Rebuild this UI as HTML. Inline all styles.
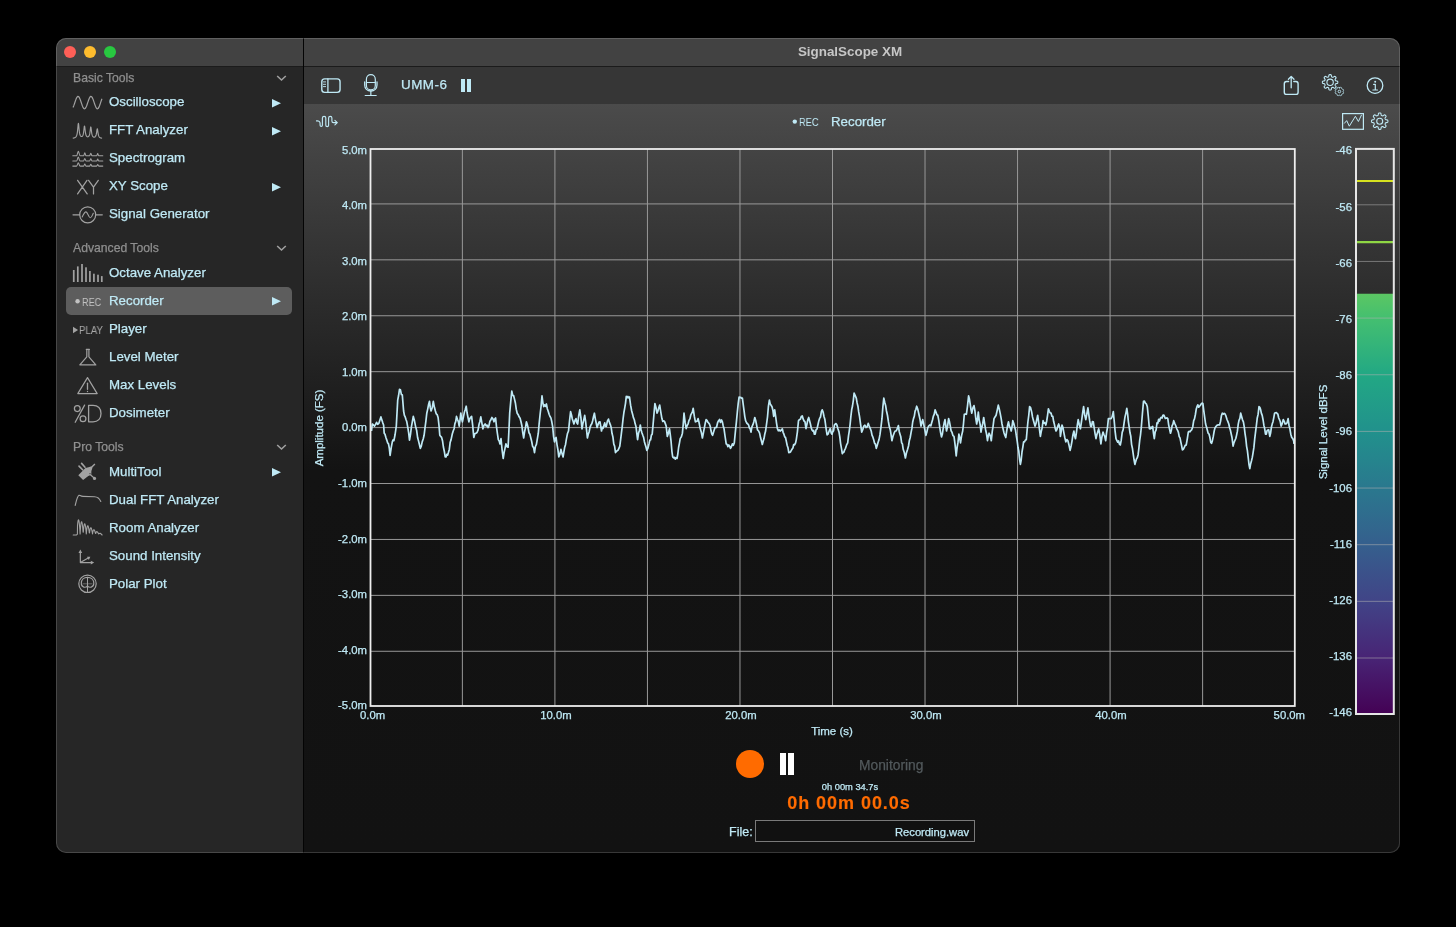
<!DOCTYPE html>
<html><head><meta charset="utf-8"><style>
html,body{margin:0;padding:0;width:1456px;height:927px;overflow:hidden;background:#000;}
.t{position:absolute;font-family:"Liberation Sans", sans-serif;white-space:nowrap;-webkit-text-stroke:0.25px currentColor;will-change:transform;}
svg{overflow:visible;}
</style></head><body>
<div id="win" style="position:absolute;left:56px;top:38px;width:1344px;height:815px;border-radius:10px;overflow:hidden;background:#262626;"><div style="position:absolute;left:0;top:0;width:1344px;height:28px;background:#424242;"></div><div style="position:absolute;left:0;top:28px;width:1344px;height:1px;background:#1b1b1b;"></div><div style="position:absolute;left:248px;top:29px;width:1096px;height:37px;background:#363636;"></div><div style="position:absolute;left:248px;top:66px;width:1096px;height:749px;background:linear-gradient(to bottom,#4b4b4b 0px,#2e2e2e 183px,#131313 366px,#121212 749px);"></div><div style="position:absolute;left:247px;top:0;width:1px;height:815px;background:#040404;"></div></div><div style="position:absolute;left:56px;top:38px;width:1344px;height:815px;border-radius:10px;box-shadow:inset 0 0 0 1px rgba(255,255,255,0.16);"></div><div style="position:absolute;left:63.89999999999999px;top:45.849999999999994px;width:12.4px;height:12.4px;border-radius:50%;background:#fe5f57;"></div><div style="position:absolute;left:83.89999999999999px;top:45.849999999999994px;width:12.4px;height:12.4px;border-radius:50%;background:#febc2e;"></div><div style="position:absolute;left:104.0px;top:45.849999999999994px;width:12.4px;height:12.4px;border-radius:50%;background:#28c840;"></div><div class="t" style="top:43.38px;height:18.76px;line-height:18.76px;font-size:13.4px;color:#c6c6c6;font-weight:700;left:550.3px;width:600px;text-align:center;-webkit-text-stroke:0;">SignalScope XM</div><div class="t" style="top:69.53px;height:17.08px;line-height:17.08px;font-size:12.2px;color:#8f8f8f;font-weight:400;left:72.5px;">Basic Tools</div><svg style="position:absolute;left:276px;top:73.5px;" width="11" height="8" viewBox="0 0 11 8"><path d="M1.2 2 L5.5 6 L9.8 2" fill="none" stroke="#a0a0a0" stroke-width="1.55"/></svg><div class="t" style="top:239.63px;height:17.08px;line-height:17.08px;font-size:12.2px;color:#8f8f8f;font-weight:400;left:72.5px;">Advanced Tools</div><svg style="position:absolute;left:276px;top:243.6px;" width="11" height="8" viewBox="0 0 11 8"><path d="M1.2 2 L5.5 6 L9.8 2" fill="none" stroke="#a0a0a0" stroke-width="1.55"/></svg><div class="t" style="top:438.53px;height:17.08px;line-height:17.08px;font-size:12.2px;color:#8f8f8f;font-weight:400;left:72.5px;">Pro Tools</div><svg style="position:absolute;left:276px;top:442.5px;" width="11" height="8" viewBox="0 0 11 8"><path d="M1.2 2 L5.5 6 L9.8 2" fill="none" stroke="#a0a0a0" stroke-width="1.55"/></svg><div style="position:absolute;left:66px;top:286.6px;width:226.2px;height:28px;border-radius:5px;background:#5d5d5d;"></div><div class="t" style="top:93.48px;height:18.62px;line-height:18.62px;font-size:13.3px;color:#bfe9f5;font-weight:400;left:109.4px;">Oscilloscope</div><svg style="position:absolute;left:272px;top:98.49999999999999px;" width="9" height="8.4" viewBox="0 0 9 8.4"><path d="M0 0 L9 4.2 L0 8.4 Z" fill="#bfe9f5"/></svg><div class="t" style="top:121.48px;height:18.62px;line-height:18.62px;font-size:13.3px;color:#bfe9f5;font-weight:400;left:109.4px;">FFT Analyzer</div><svg style="position:absolute;left:272px;top:126.49999999999999px;" width="9" height="8.4" viewBox="0 0 9 8.4"><path d="M0 0 L9 4.2 L0 8.4 Z" fill="#bfe9f5"/></svg><div class="t" style="top:149.48px;height:18.62px;line-height:18.62px;font-size:13.3px;color:#bfe9f5;font-weight:400;left:109.4px;">Spectrogram</div><div class="t" style="top:177.48px;height:18.62px;line-height:18.62px;font-size:13.3px;color:#bfe9f5;font-weight:400;left:109.4px;">XY Scope</div><svg style="position:absolute;left:272px;top:182.5px;" width="9" height="8.4" viewBox="0 0 9 8.4"><path d="M0 0 L9 4.2 L0 8.4 Z" fill="#bfe9f5"/></svg><div class="t" style="top:205.48px;height:18.62px;line-height:18.62px;font-size:13.3px;color:#bfe9f5;font-weight:400;left:109.4px;">Signal Generator</div><div class="t" style="top:264.18px;height:18.62px;line-height:18.62px;font-size:13.3px;color:#bfe9f5;font-weight:400;left:109.4px;">Octave Analyzer</div><div class="t" style="top:292.18px;height:18.62px;line-height:18.62px;font-size:13.3px;color:#bfe9f5;font-weight:400;left:109.4px;">Recorder</div><svg style="position:absolute;left:272px;top:297.20000000000005px;" width="9" height="8.4" viewBox="0 0 9 8.4"><path d="M0 0 L9 4.2 L0 8.4 Z" fill="#bfe9f5"/></svg><div class="t" style="top:320.18px;height:18.62px;line-height:18.62px;font-size:13.3px;color:#bfe9f5;font-weight:400;left:109.4px;">Player</div><div class="t" style="top:348.18px;height:18.62px;line-height:18.62px;font-size:13.3px;color:#bfe9f5;font-weight:400;left:109.4px;">Level Meter</div><div class="t" style="top:376.18px;height:18.62px;line-height:18.62px;font-size:13.3px;color:#bfe9f5;font-weight:400;left:109.4px;">Max Levels</div><div class="t" style="top:404.18px;height:18.62px;line-height:18.62px;font-size:13.3px;color:#bfe9f5;font-weight:400;left:109.4px;">Dosimeter</div><div class="t" style="top:462.68px;height:18.62px;line-height:18.62px;font-size:13.3px;color:#bfe9f5;font-weight:400;left:109.4px;">MultiTool</div><svg style="position:absolute;left:272px;top:467.70000000000005px;" width="9" height="8.4" viewBox="0 0 9 8.4"><path d="M0 0 L9 4.2 L0 8.4 Z" fill="#bfe9f5"/></svg><div class="t" style="top:490.68px;height:18.62px;line-height:18.62px;font-size:13.3px;color:#bfe9f5;font-weight:400;left:109.4px;">Dual FFT Analyzer</div><div class="t" style="top:518.68px;height:18.62px;line-height:18.62px;font-size:13.3px;color:#bfe9f5;font-weight:400;left:109.4px;">Room Analyzer</div><div class="t" style="top:546.68px;height:18.62px;line-height:18.62px;font-size:13.3px;color:#bfe9f5;font-weight:400;left:109.4px;">Sound Intensity</div><div class="t" style="top:574.68px;height:18.62px;line-height:18.62px;font-size:13.3px;color:#bfe9f5;font-weight:400;left:109.4px;">Polar Plot</div><svg style="position:absolute;left:0;top:0;overflow:visible" width="1456" height="927" viewBox="0 0 1456 927"><path d="M73.20 107.01 L73.68 105.89 L74.15 104.59 L74.63 103.19 L75.11 101.75 L75.58 100.36 L76.06 99.09 L76.54 98.01 L77.01 97.17 L77.49 96.63 L77.97 96.41 L78.44 96.51 L78.92 96.95 L79.40 97.69 L79.87 98.69 L80.35 99.90 L80.83 101.26 L81.30 102.69 L81.78 104.11 L82.26 105.45 L82.73 106.64 L83.21 107.62 L83.69 108.32 L84.16 108.72 L84.64 108.79 L85.12 108.52 L85.59 107.94 L86.07 107.07 L86.55 105.97 L87.02 104.68 L87.50 103.28 L87.98 101.84 L88.45 100.45 L88.93 99.17 L89.41 98.07 L89.88 97.22 L90.36 96.65 L90.84 96.41 L91.31 96.50 L91.79 96.91 L92.27 97.63 L92.74 98.62 L93.22 99.82 L93.70 101.17 L94.17 102.59 L94.65 104.02 L95.13 105.37 L95.60 106.57 L96.08 107.56 L96.56 108.28 L97.03 108.70 L97.51 108.79 L97.99 108.55 L98.46 107.99 L98.94 107.14 L99.42 106.04 L99.89 104.76 L100.37 103.37 L100.85 101.93 L101.32 100.53 L101.80 99.24" fill="none" stroke="#a2a2a2" stroke-width="1.2" stroke-linecap="round" stroke-linejoin="round" /><path d="M73.20 138.10 L73.40 138.07 L73.60 138.03 L73.80 137.99 L74.00 137.94 L74.20 137.89 L74.40 137.82 L74.60 137.75 L74.80 137.67 L75.00 137.57 L75.20 137.46 L75.40 137.33 L75.60 137.17 L75.80 136.99 L76.00 136.76 L76.20 136.47 L76.40 136.12 L76.60 135.67 L76.80 135.09 L77.00 134.35 L77.20 133.36 L77.40 132.07 L77.60 130.40 L77.80 128.33 L78.00 126.05 L78.20 124.10 L78.40 123.30 L78.60 124.06 L78.80 125.98 L79.00 128.23 L79.20 130.26 L79.40 131.90 L79.60 133.15 L79.80 134.08 L80.00 134.79 L80.20 135.31 L80.40 135.70 L80.60 136.00 L80.80 136.21 L81.00 136.36 L81.20 136.46 L81.40 136.51 L81.60 136.52 L81.80 136.49 L82.00 136.41 L82.20 136.28 L82.40 136.09 L82.60 135.82 L82.80 135.46 L83.00 134.97 L83.20 134.32 L83.40 133.44 L83.60 132.27 L83.80 130.77 L84.00 128.99 L84.20 127.21 L84.40 126.04 L84.60 126.04 L84.80 127.23 L85.00 129.01 L85.20 130.80 L85.40 132.31 L85.60 133.49 L85.80 134.38 L86.00 135.05 L86.20 135.56 L86.40 135.94 L86.60 136.22 L86.80 136.44 L87.00 136.59 L87.20 136.70 L87.40 136.77 L87.60 136.81 L87.80 136.81 L88.00 136.78 L88.20 136.71 L88.40 136.60 L88.60 136.45 L88.80 136.23 L89.00 135.94 L89.20 135.55 L89.40 135.03 L89.60 134.33 L89.80 133.39 L90.00 132.17 L90.20 130.65 L90.40 128.96 L90.60 127.53 L90.80 126.95 L91.00 127.54 L91.20 128.99 L91.40 130.68 L91.60 132.22 L91.80 133.45 L92.00 134.40 L92.20 135.12 L92.40 135.66 L92.60 136.07 L92.80 136.38 L93.00 136.61 L93.20 136.79 L93.40 136.92 L93.60 137.02 L93.80 137.09 L94.00 137.12 L94.20 137.13 L94.40 137.12 L94.60 137.07 L94.80 137.00 L95.00 136.89 L95.20 136.73 L95.40 136.52 L95.60 136.23 L95.80 135.85 L96.00 135.33 L96.20 134.64 L96.40 133.73 L96.60 132.55 L96.80 131.16 L97.00 129.77 L97.20 128.85 L97.40 128.87 L97.60 129.81 L97.80 131.23 L98.00 132.65 L98.20 133.85 L98.40 134.80 L98.60 135.52 L98.80 136.07 L99.00 136.49 L99.20 136.82 L99.40 137.08 L99.60 137.28 L99.80 137.45 L100.00 137.58 L100.20 137.69 L100.40 137.78 L100.60 137.86 L100.80 137.93 L101.00 137.99 L101.20 138.04 L101.40 138.08 L101.60 138.12" fill="none" stroke="#a2a2a2" stroke-width="1.15" stroke-linecap="round" stroke-linejoin="round" /><path d="M72.8 155.8 L76.6 155.8 C77.4 155.8 77.6 151.20000000000002 78.3 151.20000000000002 C79 151.20000000000002 79.2 155.8 80.2 155.8 L83.6 155.8 C84.1 155.8 84.3 152.8 84.8 152.8 C85.3 152.8 85.5 155.8 86 155.8 L89.6 155.8 C90.1 155.8 90.3 153.20000000000002 90.8 153.20000000000002 C91.3 153.20000000000002 91.5 155.8 92 155.8 L96.6 155.8 C97.1 155.8 97.3 153.60000000000002 97.7 153.60000000000002 C98.1 153.60000000000002 98.3 155.8 98.8 155.8 L102.8 155.8" fill="none" stroke="#a2a2a2" stroke-width="1.05" stroke-linecap="round" stroke-linejoin="round" /><path d="M72.8 161.0 L76.6 161.0 C77.4 161.0 77.6 157.09 78.3 157.09 C79 157.09 79.2 161.0 80.2 161.0 L83.6 161.0 C84.1 161.0 84.3 158.45 84.8 158.45 C85.3 158.45 85.5 161.0 86 161.0 L89.6 161.0 C90.1 161.0 90.3 158.79 90.8 158.79 C91.3 158.79 91.5 161.0 92 161.0 L96.6 161.0 C97.1 161.0 97.3 159.13 97.7 159.13 C98.1 159.13 98.3 161.0 98.8 161.0 L102.8 161.0" fill="none" stroke="#a2a2a2" stroke-width="1.05" stroke-linecap="round" stroke-linejoin="round" /><path d="M72.8 166.1 L76.6 166.1 C77.4 166.1 77.6 162.88 78.3 162.88 C79 162.88 79.2 166.1 80.2 166.1 L83.6 166.1 C84.1 166.1 84.3 164.0 84.8 164.0 C85.3 164.0 85.5 166.1 86 166.1 L89.6 166.1 C90.1 166.1 90.3 164.28 90.8 164.28 C91.3 164.28 91.5 166.1 92 166.1 L96.6 166.1 C97.1 166.1 97.3 164.56 97.7 164.56 C98.1 164.56 98.3 166.1 98.8 166.1 L102.8 166.1" fill="none" stroke="#a2a2a2" stroke-width="1.05" stroke-linecap="round" stroke-linejoin="round" /><path d="M77.6 180.3 L87.2 193.9 M87.0 180.3 L77.6 193.9 M88.6 180.3 L93.5 187.2 L98.3 180.3 M93.5 187.2 L93.5 193.9" fill="none" stroke="#a2a2a2" stroke-width="1.25" stroke-linecap="round" stroke-linejoin="round" stroke-linecap="butt"/><circle cx="87.7" cy="214.8" r="8.0" fill="none" stroke="#a2a2a2" stroke-width="1.2"/><path d="M73 214.8 L79.7 214.8 M95.7 214.8 L102.3 214.8" fill="none" stroke="#a2a2a2" stroke-width="1.2" stroke-linecap="round" stroke-linejoin="round" stroke-linecap="butt"/><path d="M82.2 217 C83.6 214 84.6 211.8 86 211.9 C87.6 212 88.6 217.8 90.3 217.8 C91.6 217.8 92.4 215 93.3 213.2" fill="none" stroke="#a2a2a2" stroke-width="1.1" stroke-linecap="round" stroke-linejoin="round" /><rect x="72.9" y="270" width="1.7" height="12" fill="#a2a2a2"/><rect x="76.95" y="266.4" width="1.7" height="15.600000000000023" fill="#a2a2a2"/><rect x="81.15" y="264" width="1.7" height="18" fill="#a2a2a2"/><rect x="85.15" y="267.3" width="1.7" height="14.699999999999989" fill="#a2a2a2"/><rect x="89.05000000000001" y="271" width="1.7" height="11" fill="#a2a2a2"/><rect x="93.05000000000001" y="273.7" width="1.7" height="8.300000000000011" fill="#a2a2a2"/><rect x="97.15" y="274.7" width="1.7" height="7.300000000000011" fill="#a2a2a2"/><rect x="100.95" y="276.1" width="1.7" height="5.899999999999977" fill="#a2a2a2"/><circle cx="77.55" cy="301.3" r="2.2" fill="#c2c2c2"/><path d="M73 326.7 L78.1 330 L73 333.3 Z" fill="#a2a2a2"/><path d="M86.3 349.4 L89.4 349.4 M86.8 349.4 L86.8 356.8 L79.8 364.9 L95.8 364.9 L88.9 356.8 L88.9 349.4" fill="none" stroke="#a2a2a2" stroke-width="1.2" stroke-linecap="round" stroke-linejoin="round" /><path d="M87.5 377.6 L97.2 393.6 L77.8 393.6 Z" fill="none" stroke="#a2a2a2" stroke-width="1.2" stroke-linecap="round" stroke-linejoin="round" /><path d="M87.5 383.2 L87.5 389.3" fill="none" stroke="#a2a2a2" stroke-width="1.3" stroke-linecap="round" stroke-linejoin="round" /><circle cx="87.5" cy="391.5" r="0.7" fill="#a2a2a2"/><circle cx="77.3" cy="408.6" r="2.9" fill="none" stroke="#a2a2a2" stroke-width="1.25"/><circle cx="83.0" cy="418.7" r="2.9" fill="none" stroke="#a2a2a2" stroke-width="1.25"/><path d="M84.6 405.1 L75.2 422.3" fill="none" stroke="#a2a2a2" stroke-width="1.25" stroke-linecap="round" stroke-linejoin="round" stroke-linecap="butt"/><path d="M88.6 405.3 L88.6 421.8 L93 421.8 C98 421.8 101 418.5 101 413.5 C101 408.5 98 405.3 93 405.3 Z" fill="none" stroke="#a2a2a2" stroke-width="1.3" stroke-linecap="round" stroke-linejoin="round" /><path d="M78.3 475.3 L85.4 468.0 Q88.6 467.6 91.6 466.3 L94.4 463.5 L95.4 464.4 L92.6 467.3 Q90.9 471.0 91.3 474.7 L88.3 475.9 L83.1 480.0 Z" fill="#a2a2a2"/><path d="M79.0 466.1 L82.6 469.8 M81.6 463.4 L85.0 467.2" fill="none" stroke="#a2a2a2" stroke-width="1.6" stroke-linecap="round" stroke-linejoin="round" /><path d="M90.4 474.8 L94.4 478.3" fill="none" stroke="#a2a2a2" stroke-width="1.2" stroke-linecap="round" stroke-linejoin="round" /><circle cx="94.5" cy="478.4" r="1.6" fill="#a2a2a2"/><circle cx="90.0" cy="473.6" r="0.6" fill="#333"/><path d="M75.2 505.4 C76.5 500 77.3 496.2 79.0 495.3 C79.8 495.0 80.5 496.3 83 496.4 L94.5 496.8 C97.2 496.9 99.5 498.5 100.8 501.5" fill="none" stroke="#a2a2a2" stroke-width="1.15" stroke-linecap="round" stroke-linejoin="round" /><path d="M73.20 535.00 L76.60 534.90 L77.40 534.20 L77.50 525.68 L77.70 523.56 L77.90 521.91 L78.10 520.74 L78.30 520.04 L78.50 519.81 L78.70 520.06 L78.90 520.75 L79.10 521.88 L79.30 523.42 L79.50 525.34 L79.70 527.62 L79.90 530.31 L80.10 534.00 L80.30 530.38 L80.50 527.86 L80.70 525.83 L80.90 524.21 L81.10 523.01 L81.30 522.21 L81.50 521.83 L81.70 521.86 L81.90 522.28 L82.10 523.09 L82.30 524.25 L82.50 525.74 L82.70 527.54 L82.90 529.66 L83.10 532.20 L83.30 532.22 L83.50 529.81 L83.70 527.90 L83.90 526.38 L84.10 525.20 L84.30 524.38 L84.50 523.91 L84.70 523.78 L84.90 523.99 L85.10 524.52 L85.30 525.36 L85.50 526.49 L85.70 527.87 L85.90 529.50 L86.10 531.41 L86.30 534.00 L86.50 531.48 L86.70 529.75 L86.90 528.36 L87.10 527.28 L87.30 526.49 L87.50 525.98 L87.70 525.76 L87.90 525.82 L88.10 526.15 L88.30 526.73 L88.50 527.54 L88.70 528.56 L88.90 529.77 L89.10 531.17 L89.30 532.83 L89.50 532.85 L89.70 531.32 L89.90 530.13 L90.10 529.19 L90.30 528.49 L90.50 528.02 L90.70 527.77 L90.90 527.74 L91.10 527.92 L91.30 528.29 L91.50 528.84 L91.70 529.55 L91.90 530.41 L92.10 531.39 L92.30 532.51 L92.50 534.00 L92.70 532.58 L92.90 531.63 L93.10 530.90 L93.30 530.35 L93.50 529.97 L93.70 529.75 L93.90 529.70 L94.10 529.79 L94.30 530.02 L94.50 530.37 L94.70 530.82 L94.90 531.37 L95.10 531.99 L95.30 532.69 L95.50 533.47 L95.70 533.49 L95.90 532.83 L96.10 532.35 L96.30 532.01 L96.50 531.78 L96.70 531.66 L96.90 531.64 L97.10 531.71 L97.30 531.85 L97.50 532.06 L97.70 532.32 L97.90 532.62 L98.10 532.94 L98.30 533.27 L98.50 533.61 L98.70 534.00 L98.90 533.68 L99.10 533.52 L99.30 533.43 L99.50 533.41 L99.70 533.45 L100.50 533.30 L102.10 535.00" fill="none" stroke="#a2a2a2" stroke-width="1.1" stroke-linecap="round" stroke-linejoin="round" /><path d="M80.35 551.8 L80.35 562.6 L92 562.6 M80.35 562.4 L88.6 557.8" fill="none" stroke="#a2a2a2" stroke-width="1.2" stroke-linecap="round" stroke-linejoin="round" stroke-linecap="butt"/><path d="M80.35 549.6 L82.2 553.0 L78.5 553.0 Z M94.2 562.6 L90.8 564.4 L90.8 560.8 Z M90.4 556.8 L88.8 559.9 L87.0 556.8 Z" fill="#a2a2a2"/><circle cx="87.5" cy="583.8" r="8.7" fill="none" stroke="#a2a2a2" stroke-width="1.2"/><path d="M87.5 585.8 C86 587.9 81.3 588 81.3 583.3 C81.3 579.5 84 577.3 87.5 577.3 C91 577.3 93.8 579.5 93.8 583.3 C93.8 588 89 587.9 87.5 585.8 Z" fill="none" stroke="#a2a2a2" stroke-width="1.15" stroke-linecap="round" stroke-linejoin="round" /><path d="M87.5 577.3 L87.5 591.8" fill="none" stroke="#a2a2a2" stroke-width="1.0" stroke-linecap="round" stroke-linejoin="round" stroke-linecap="butt"/><path d="M83 583.8 L92 583.8" fill="none" stroke="#a2a2a2" stroke-width="0.9" stroke-linecap="round" stroke-linejoin="round" stroke-linecap="butt" opacity="0.6"/><rect x="321.8" y="78.9" width="18.25" height="13.5" rx="2.8" fill="none" stroke="#bfe9f5" stroke-width="1.4"/><path d="M327.9 79 L327.9 92.3" fill="none" stroke="#bfe9f5" stroke-width="1.3" stroke-linecap="round" stroke-linejoin="round" stroke-linecap="butt"/><path d="M323.4 81.9 L325.6 81.9 M323.4 84.3 L325.6 84.3 M323.4 86.6 L325.6 86.6" fill="none" stroke="#bfe9f5" stroke-width="0.9" stroke-linecap="round" stroke-linejoin="round" /><rect x="366.4" y="74.7" width="8.9" height="15.2" rx="4.45" fill="none" stroke="#bfe9f5" stroke-width="1.2"/><path d="M366.5 82.5 L375.2 82.5" fill="none" stroke="#bfe9f5" stroke-width="1.1" stroke-linecap="round" stroke-linejoin="round" /><path d="M364.7 82 L364.7 85 C364.7 88.5 367.3 91 370.85 91 C374.4 91 377 88.5 377 85 L377 82" fill="none" stroke="#bfe9f5" stroke-width="1.3" stroke-linecap="round" stroke-linejoin="round" /><path d="M370.85 91 L370.85 95.4 M365.2 95.5 L376.2 95.5" fill="none" stroke="#bfe9f5" stroke-width="1.2" stroke-linecap="round" stroke-linejoin="round" stroke-linecap="butt"/><path d="M1288.6 81.5 L1286.5 81.5 Q1284.3 81.5 1284.3 83.7 L1284.3 92.2 Q1284.3 94.4 1286.5 94.4 L1295.9 94.4 Q1298.1 94.4 1298.1 92.2 L1298.1 83.7 Q1298.1 81.5 1295.9 81.5 L1293.8 81.5" fill="none" stroke="#bfe9f5" stroke-width="1.4" stroke-linecap="round" stroke-linejoin="round" /><path d="M1291.2 87.8 L1291.2 76.6 M1288.4 79.3 L1291.2 76.4 L1294.0 79.3" fill="none" stroke="#bfe9f5" stroke-width="1.3" stroke-linecap="round" stroke-linejoin="round" /><path d="M1330.10 74.60 L1330.30 74.61 L1330.50 74.62 L1330.70 74.66 L1330.90 74.72 L1331.08 74.85 L1331.24 75.10 L1331.36 75.52 L1331.43 76.03 L1331.50 76.45 L1331.60 76.71 L1331.71 76.85 L1331.84 76.94 L1331.97 77.01 L1332.11 77.07 L1332.24 77.13 L1332.38 77.18 L1332.52 77.23 L1332.66 77.28 L1332.81 77.31 L1332.99 77.29 L1333.24 77.17 L1333.59 76.93 L1334.00 76.62 L1334.38 76.41 L1334.67 76.34 L1334.89 76.38 L1335.08 76.47 L1335.24 76.59 L1335.40 76.72 L1335.54 76.86 L1335.68 77.00 L1335.81 77.16 L1335.93 77.32 L1336.02 77.51 L1336.06 77.73 L1335.99 78.02 L1335.78 78.40 L1335.47 78.81 L1335.23 79.16 L1335.11 79.41 L1335.09 79.59 L1335.12 79.74 L1335.17 79.88 L1335.22 80.02 L1335.27 80.16 L1335.33 80.29 L1335.39 80.43 L1335.46 80.56 L1335.55 80.69 L1335.69 80.80 L1335.95 80.90 L1336.37 80.97 L1336.88 81.04 L1337.30 81.16 L1337.55 81.32 L1337.68 81.50 L1337.74 81.70 L1337.78 81.90 L1337.79 82.10 L1337.80 82.30 L1337.79 82.50 L1337.78 82.70 L1337.74 82.90 L1337.68 83.10 L1337.55 83.28 L1337.30 83.44 L1336.88 83.56 L1336.37 83.63 L1335.95 83.70 L1335.69 83.80 L1335.55 83.91 L1335.46 84.04 L1335.39 84.17 L1335.33 84.31 L1335.27 84.44 L1335.22 84.58 L1335.17 84.72 L1335.12 84.86 L1335.09 85.01 L1335.11 85.19 L1335.23 85.44 L1335.47 85.79 L1335.78 86.20 L1335.99 86.58 L1336.06 86.87 L1336.02 87.09 L1335.93 87.28 L1335.81 87.44 L1335.68 87.60 L1335.54 87.74 L1335.40 87.88 L1335.24 88.01 L1335.08 88.13 L1334.89 88.22 L1334.67 88.26 L1334.38 88.19 L1334.00 87.98 L1333.59 87.67 L1333.24 87.43 L1332.99 87.31 L1332.81 87.29 L1332.66 87.32 L1332.52 87.37 L1332.38 87.42 L1332.24 87.47 L1332.11 87.53 L1331.97 87.59 L1331.84 87.66 L1331.71 87.75 L1331.60 87.89 L1331.50 88.15 L1331.43 88.57 L1331.36 89.08 L1331.24 89.50 L1331.08 89.75 L1330.90 89.88 L1330.70 89.94 L1330.50 89.98 L1330.30 89.99 L1330.10 90.00 L1329.90 89.99 L1329.70 89.98 L1329.50 89.94 L1329.30 89.88 L1329.12 89.75 L1328.96 89.50 L1328.84 89.08 L1328.77 88.57 L1328.70 88.15 L1328.60 87.89 L1328.49 87.75 L1328.36 87.66 L1328.23 87.59 L1328.09 87.53 L1327.96 87.47 L1327.82 87.42 L1327.68 87.37 L1327.54 87.32 L1327.39 87.29 L1327.21 87.31 L1326.96 87.43 L1326.61 87.67 L1326.20 87.98 L1325.82 88.19 L1325.53 88.26 L1325.31 88.22 L1325.12 88.13 L1324.96 88.01 L1324.80 87.88 L1324.66 87.74 L1324.52 87.60 L1324.39 87.44 L1324.27 87.28 L1324.18 87.09 L1324.14 86.87 L1324.21 86.58 L1324.42 86.20 L1324.73 85.79 L1324.97 85.44 L1325.09 85.19 L1325.11 85.01 L1325.08 84.86 L1325.03 84.72 L1324.98 84.58 L1324.93 84.44 L1324.87 84.31 L1324.81 84.17 L1324.74 84.04 L1324.65 83.91 L1324.51 83.80 L1324.25 83.70 L1323.83 83.63 L1323.32 83.56 L1322.90 83.44 L1322.65 83.28 L1322.52 83.10 L1322.46 82.90 L1322.42 82.70 L1322.41 82.50 L1322.40 82.30 L1322.41 82.10 L1322.42 81.90 L1322.46 81.70 L1322.52 81.50 L1322.65 81.32 L1322.90 81.16 L1323.32 81.04 L1323.83 80.97 L1324.25 80.90 L1324.51 80.80 L1324.65 80.69 L1324.74 80.56 L1324.81 80.43 L1324.87 80.29 L1324.93 80.16 L1324.98 80.02 L1325.03 79.88 L1325.08 79.74 L1325.11 79.59 L1325.09 79.41 L1324.97 79.16 L1324.73 78.81 L1324.42 78.40 L1324.21 78.02 L1324.14 77.73 L1324.18 77.51 L1324.27 77.32 L1324.39 77.16 L1324.52 77.00 L1324.66 76.86 L1324.80 76.72 L1324.96 76.59 L1325.12 76.47 L1325.31 76.38 L1325.53 76.34 L1325.82 76.41 L1326.20 76.62 L1326.61 76.93 L1326.96 77.17 L1327.21 77.29 L1327.39 77.31 L1327.54 77.28 L1327.68 77.23 L1327.82 77.18 L1327.96 77.13 L1328.09 77.07 L1328.23 77.01 L1328.36 76.94 L1328.49 76.85 L1328.60 76.71 L1328.70 76.45 L1328.77 76.03 L1328.84 75.52 L1328.96 75.10 L1329.12 74.85 L1329.30 74.72 L1329.50 74.66 L1329.70 74.62 L1329.90 74.61 Z" fill="none" stroke="#bfe9f5" stroke-width="1.1" stroke-linecap="round" stroke-linejoin="round" /><circle cx="1330.1" cy="82.3" r="3.2" fill="none" stroke="#bfe9f5" stroke-width="1.1"/><path d="M1339.40 87.80 L1339.50 87.80 L1339.59 87.80 L1339.69 87.80 L1339.79 87.79 L1339.89 87.77 L1340.00 87.71 L1340.12 87.60 L1340.26 87.46 L1340.39 87.36 L1340.52 87.31 L1340.64 87.31 L1340.76 87.33 L1340.87 87.36 L1340.98 87.39 L1341.08 87.43 L1341.19 87.48 L1341.29 87.53 L1341.39 87.59 L1341.49 87.66 L1341.57 87.74 L1341.63 87.87 L1341.65 88.04 L1341.65 88.23 L1341.66 88.40 L1341.69 88.51 L1341.75 88.60 L1341.81 88.68 L1341.88 88.75 L1341.95 88.82 L1342.02 88.88 L1342.08 88.95 L1342.15 89.02 L1342.22 89.09 L1342.30 89.15 L1342.39 89.21 L1342.50 89.24 L1342.67 89.25 L1342.86 89.25 L1343.03 89.27 L1343.16 89.33 L1343.24 89.41 L1343.31 89.51 L1343.37 89.61 L1343.42 89.71 L1343.47 89.82 L1343.51 89.92 L1343.54 90.03 L1343.57 90.14 L1343.59 90.26 L1343.59 90.38 L1343.54 90.51 L1343.44 90.64 L1343.30 90.78 L1343.19 90.90 L1343.13 91.01 L1343.11 91.11 L1343.10 91.21 L1343.10 91.31 L1343.10 91.40 L1343.10 91.50 L1343.10 91.60 L1343.10 91.69 L1343.10 91.79 L1343.11 91.89 L1343.13 91.99 L1343.19 92.10 L1343.30 92.22 L1343.44 92.36 L1343.54 92.49 L1343.59 92.62 L1343.59 92.74 L1343.57 92.86 L1343.54 92.97 L1343.51 93.08 L1343.47 93.18 L1343.42 93.29 L1343.37 93.39 L1343.31 93.49 L1343.24 93.59 L1343.16 93.67 L1343.03 93.73 L1342.86 93.75 L1342.67 93.75 L1342.50 93.76 L1342.39 93.79 L1342.30 93.85 L1342.22 93.91 L1342.15 93.98 L1342.08 94.05 L1342.02 94.12 L1341.95 94.18 L1341.88 94.25 L1341.81 94.32 L1341.75 94.40 L1341.69 94.49 L1341.66 94.60 L1341.65 94.77 L1341.65 94.96 L1341.63 95.13 L1341.57 95.26 L1341.49 95.34 L1341.39 95.41 L1341.29 95.47 L1341.19 95.52 L1341.08 95.57 L1340.98 95.61 L1340.87 95.64 L1340.76 95.67 L1340.64 95.69 L1340.52 95.69 L1340.39 95.64 L1340.26 95.54 L1340.12 95.40 L1340.00 95.29 L1339.89 95.23 L1339.79 95.21 L1339.69 95.20 L1339.59 95.20 L1339.50 95.20 L1339.40 95.20 L1339.30 95.20 L1339.21 95.20 L1339.11 95.20 L1339.01 95.21 L1338.91 95.23 L1338.80 95.29 L1338.68 95.40 L1338.54 95.54 L1338.41 95.64 L1338.28 95.69 L1338.16 95.69 L1338.04 95.67 L1337.93 95.64 L1337.82 95.61 L1337.72 95.57 L1337.61 95.52 L1337.51 95.47 L1337.41 95.41 L1337.31 95.34 L1337.23 95.26 L1337.17 95.13 L1337.15 94.96 L1337.15 94.77 L1337.14 94.60 L1337.11 94.49 L1337.05 94.40 L1336.99 94.32 L1336.92 94.25 L1336.85 94.18 L1336.78 94.12 L1336.72 94.05 L1336.65 93.98 L1336.58 93.91 L1336.50 93.85 L1336.41 93.79 L1336.30 93.76 L1336.13 93.75 L1335.94 93.75 L1335.77 93.73 L1335.64 93.67 L1335.56 93.59 L1335.49 93.49 L1335.43 93.39 L1335.38 93.29 L1335.33 93.18 L1335.29 93.08 L1335.26 92.97 L1335.23 92.86 L1335.21 92.74 L1335.21 92.62 L1335.26 92.49 L1335.36 92.36 L1335.50 92.22 L1335.61 92.10 L1335.67 91.99 L1335.69 91.89 L1335.70 91.79 L1335.70 91.69 L1335.70 91.60 L1335.70 91.50 L1335.70 91.40 L1335.70 91.31 L1335.70 91.21 L1335.69 91.11 L1335.67 91.01 L1335.61 90.90 L1335.50 90.78 L1335.36 90.64 L1335.26 90.51 L1335.21 90.38 L1335.21 90.26 L1335.23 90.14 L1335.26 90.03 L1335.29 89.92 L1335.33 89.82 L1335.38 89.71 L1335.43 89.61 L1335.49 89.51 L1335.56 89.41 L1335.64 89.33 L1335.77 89.27 L1335.94 89.25 L1336.13 89.25 L1336.30 89.24 L1336.41 89.21 L1336.50 89.15 L1336.58 89.09 L1336.65 89.02 L1336.72 88.95 L1336.78 88.88 L1336.85 88.82 L1336.92 88.75 L1336.99 88.68 L1337.05 88.60 L1337.11 88.51 L1337.14 88.40 L1337.15 88.23 L1337.15 88.04 L1337.17 87.87 L1337.23 87.74 L1337.31 87.66 L1337.41 87.59 L1337.51 87.53 L1337.61 87.48 L1337.72 87.43 L1337.82 87.39 L1337.93 87.36 L1338.04 87.33 L1338.16 87.31 L1338.28 87.31 L1338.41 87.36 L1338.54 87.46 L1338.68 87.60 L1338.80 87.71 L1338.91 87.77 L1339.01 87.79 L1339.11 87.80 L1339.21 87.80 L1339.30 87.80 Z" fill="none" stroke="#bfe9f5" stroke-width="1.0" stroke-linecap="round" stroke-linejoin="round" /><circle cx="1339.4" cy="91.5" r="1.3" fill="none" stroke="#bfe9f5" stroke-width="0.9"/><circle cx="1375" cy="85.6" r="7.8" fill="none" stroke="#bfe9f5" stroke-width="1.3"/><circle cx="1375.2" cy="81.7" r="1.0" fill="#bfe9f5"/><path d="M1373.6 84.3 L1375.3 84.3 L1375.3 89.9 M1372.9 90.0 L1377.5 90.0" fill="none" stroke="#bfe9f5" stroke-width="1.2" stroke-linecap="round" stroke-linejoin="round" stroke-linecap="butt"/><path d="M316.5 120.9 C318.8 120.6 320.1 121.6 320.1 123.4 L320.1 125.2 A1.15 1.15 0 0 0 322.4 125.2 L322.4 118.0 A1.7 1.7 0 0 1 325.8 118.0 L325.8 125.2 A1.4 1.4 0 0 0 328.6 125.2 L328.6 118.0 A1.65 1.65 0 0 1 331.9 118.0 L331.9 121 C331.9 122 332.5 122.6 333.5 122.6 L337.2 122.6 M334.9 120.4 L337.3 122.6 L334.9 124.8" fill="none" stroke="#bfe9f5" stroke-width="1.15" stroke-linecap="round" stroke-linejoin="round" /><rect x="1342.6" y="113.6" width="20.8" height="15.7" fill="none" stroke="#bfe9f5" stroke-width="1.2"/><path d="M1344.5 123.2 L1346.7 120.6 L1349.3 126.2 L1355.4 116.3 L1358.4 121.5 L1361.4 115.2" fill="none" stroke="#bfe9f5" stroke-width="1.0" stroke-linecap="round" stroke-linejoin="round" /><path d="M1379.70 113.00 L1379.91 113.01 L1380.13 113.02 L1380.34 113.06 L1380.55 113.13 L1380.74 113.27 L1380.91 113.53 L1381.04 113.97 L1381.12 114.50 L1381.20 114.94 L1381.30 115.21 L1381.43 115.37 L1381.56 115.46 L1381.71 115.53 L1381.85 115.60 L1382.00 115.66 L1382.14 115.72 L1382.29 115.77 L1382.44 115.82 L1382.60 115.85 L1382.80 115.83 L1383.06 115.71 L1383.43 115.46 L1383.87 115.14 L1384.27 114.92 L1384.57 114.85 L1384.81 114.89 L1385.00 114.99 L1385.18 115.12 L1385.34 115.25 L1385.50 115.40 L1385.65 115.56 L1385.78 115.72 L1385.91 115.90 L1386.01 116.09 L1386.05 116.33 L1385.98 116.63 L1385.76 117.03 L1385.44 117.47 L1385.19 117.84 L1385.07 118.10 L1385.05 118.30 L1385.08 118.46 L1385.13 118.61 L1385.18 118.76 L1385.24 118.90 L1385.30 119.05 L1385.37 119.19 L1385.44 119.34 L1385.53 119.47 L1385.69 119.60 L1385.96 119.70 L1386.40 119.78 L1386.93 119.86 L1387.37 119.99 L1387.63 120.16 L1387.77 120.35 L1387.84 120.56 L1387.88 120.77 L1387.89 120.99 L1387.90 121.20 L1387.89 121.41 L1387.88 121.63 L1387.84 121.84 L1387.77 122.05 L1387.63 122.24 L1387.37 122.41 L1386.93 122.54 L1386.40 122.62 L1385.96 122.70 L1385.69 122.80 L1385.53 122.93 L1385.44 123.06 L1385.37 123.21 L1385.30 123.35 L1385.24 123.50 L1385.18 123.64 L1385.13 123.79 L1385.08 123.94 L1385.05 124.10 L1385.07 124.30 L1385.19 124.56 L1385.44 124.93 L1385.76 125.37 L1385.98 125.77 L1386.05 126.07 L1386.01 126.31 L1385.91 126.50 L1385.78 126.68 L1385.65 126.84 L1385.50 127.00 L1385.34 127.15 L1385.18 127.28 L1385.00 127.41 L1384.81 127.51 L1384.57 127.55 L1384.27 127.48 L1383.87 127.26 L1383.43 126.94 L1383.06 126.69 L1382.80 126.57 L1382.60 126.55 L1382.44 126.58 L1382.29 126.63 L1382.14 126.68 L1382.00 126.74 L1381.85 126.80 L1381.71 126.87 L1381.56 126.94 L1381.43 127.03 L1381.30 127.19 L1381.20 127.46 L1381.12 127.90 L1381.04 128.43 L1380.91 128.87 L1380.74 129.13 L1380.55 129.27 L1380.34 129.34 L1380.13 129.38 L1379.91 129.39 L1379.70 129.40 L1379.49 129.39 L1379.27 129.38 L1379.06 129.34 L1378.85 129.27 L1378.66 129.13 L1378.49 128.87 L1378.36 128.43 L1378.28 127.90 L1378.20 127.46 L1378.10 127.19 L1377.97 127.03 L1377.84 126.94 L1377.69 126.87 L1377.55 126.80 L1377.40 126.74 L1377.26 126.68 L1377.11 126.63 L1376.96 126.58 L1376.80 126.55 L1376.60 126.57 L1376.34 126.69 L1375.97 126.94 L1375.53 127.26 L1375.13 127.48 L1374.83 127.55 L1374.59 127.51 L1374.40 127.41 L1374.22 127.28 L1374.06 127.15 L1373.90 127.00 L1373.75 126.84 L1373.62 126.68 L1373.49 126.50 L1373.39 126.31 L1373.35 126.07 L1373.42 125.77 L1373.64 125.37 L1373.96 124.93 L1374.21 124.56 L1374.33 124.30 L1374.35 124.10 L1374.32 123.94 L1374.27 123.79 L1374.22 123.64 L1374.16 123.50 L1374.10 123.35 L1374.03 123.21 L1373.96 123.06 L1373.87 122.93 L1373.71 122.80 L1373.44 122.70 L1373.00 122.62 L1372.47 122.54 L1372.03 122.41 L1371.77 122.24 L1371.63 122.05 L1371.56 121.84 L1371.52 121.63 L1371.51 121.41 L1371.50 121.20 L1371.51 120.99 L1371.52 120.77 L1371.56 120.56 L1371.63 120.35 L1371.77 120.16 L1372.03 119.99 L1372.47 119.86 L1373.00 119.78 L1373.44 119.70 L1373.71 119.60 L1373.87 119.47 L1373.96 119.34 L1374.03 119.19 L1374.10 119.05 L1374.16 118.90 L1374.22 118.76 L1374.27 118.61 L1374.32 118.46 L1374.35 118.30 L1374.33 118.10 L1374.21 117.84 L1373.96 117.47 L1373.64 117.03 L1373.42 116.63 L1373.35 116.33 L1373.39 116.09 L1373.49 115.90 L1373.62 115.72 L1373.75 115.56 L1373.90 115.40 L1374.06 115.25 L1374.22 115.12 L1374.40 114.99 L1374.59 114.89 L1374.83 114.85 L1375.13 114.92 L1375.53 115.14 L1375.97 115.46 L1376.34 115.71 L1376.60 115.83 L1376.80 115.85 L1376.96 115.82 L1377.11 115.77 L1377.26 115.72 L1377.40 115.66 L1377.55 115.60 L1377.69 115.53 L1377.84 115.46 L1377.97 115.37 L1378.10 115.21 L1378.20 114.94 L1378.28 114.50 L1378.36 113.97 L1378.49 113.53 L1378.66 113.27 L1378.85 113.13 L1379.06 113.06 L1379.27 113.02 L1379.49 113.01 Z" fill="none" stroke="#bfe9f5" stroke-width="1.1" stroke-linecap="round" stroke-linejoin="round" /><circle cx="1379.7" cy="121.2" r="3.0" fill="none" stroke="#bfe9f5" stroke-width="1.1"/><circle cx="794.8" cy="121.6" r="2.2" fill="#bfe9f5"/></svg><div class="t" style="left:81.9px;top:295.19px;height:14px;line-height:14px;font-size:10.7px;color:#c2c2c2;transform:scaleX(0.85);transform-origin:0 0;-webkit-text-stroke:0;">REC</div><div class="t" style="left:78.9px;top:323.06px;height:14px;line-height:14px;font-size:10.5px;color:#a8a8a8;transform:scaleX(0.92);transform-origin:0 0;-webkit-text-stroke:0;">PLAY</div><div class="t" style="left:799px;top:114.41px;height:16px;line-height:16px;font-size:11.8px;color:#bfe9f5;transform:scaleX(0.78);transform-origin:0 0;-webkit-text-stroke:0;">REC</div><div class="t" style="top:76.18px;height:18.76px;line-height:18.76px;font-size:13.4px;color:#bfe9f5;font-weight:400;letter-spacing:0.5px;left:401.1px;">UMM-6</div><div style="position:absolute;left:461px;top:79px;width:3.8px;height:13px;background:#bfe9f5;"></div><div style="position:absolute;left:467.3px;top:79px;width:3.8px;height:13px;background:#bfe9f5;"></div><div class="t" style="top:112.58px;height:18.62px;line-height:18.62px;font-size:13.3px;color:#bfe9f5;font-weight:400;left:830.7px;">Recorder</div><svg style="position:absolute;left:0px;top:0px;pointer-events:none;" width="1456" height="927" viewBox="0 0 1456 927"><g stroke="#989898" stroke-width="1"><line x1="462.38" y1="149.0" x2="462.38" y2="706.0" /><line x1="554.91" y1="149.0" x2="554.91" y2="706.0" /><line x1="647.44" y1="149.0" x2="647.44" y2="706.0" /><line x1="739.97" y1="149.0" x2="739.97" y2="706.0" /><line x1="832.50" y1="149.0" x2="832.50" y2="706.0" /><line x1="925.03" y1="149.0" x2="925.03" y2="706.0" /><line x1="1017.56" y1="149.0" x2="1017.56" y2="706.0" /><line x1="1110.09" y1="149.0" x2="1110.09" y2="706.0" /><line x1="1202.62" y1="149.0" x2="1202.62" y2="706.0" /><line x1="370.5" y1="203.92" x2="1294.8" y2="203.92" /><line x1="370.5" y1="259.84" x2="1294.8" y2="259.84" /><line x1="370.5" y1="315.76" x2="1294.8" y2="315.76" /><line x1="370.5" y1="371.68" x2="1294.8" y2="371.68" /><line x1="370.5" y1="427.60" x2="1294.8" y2="427.60" /><line x1="370.5" y1="483.52" x2="1294.8" y2="483.52" /><line x1="370.5" y1="539.44" x2="1294.8" y2="539.44" /><line x1="370.5" y1="595.36" x2="1294.8" y2="595.36" /><line x1="370.5" y1="651.28" x2="1294.8" y2="651.28" /></g><path d="M371.5 431.0 L372.3 424.0 L373.4 424.9 L374.5 426.1 L375.6 424.4 L376.6 422.3 L377.7 424.3 L378.8 423.4 L379.9 420.1 L380.9 416.9 L381.8 419.7 L382.7 422.6 L383.6 425.0 L384.2 433.2 L385.0 434.2 L385.9 437.5 L386.8 440.1 L387.6 442.8 L388.5 443.9 L389.3 448.2 L390.1 455.3 L391.2 447.9 L392.3 441.8 L393.1 439.9 L393.9 440.7 L395.1 434.5 L396.3 426.1 L397.7 400.2 L398.6 395.5 L399.5 389.4 L400.4 389.7 L401.4 394.7 L402.3 394.8 L403.6 411.0 L404.4 415.3 L405.2 416.9 L406.0 419.5 L406.8 421.8 L407.7 426.8 L408.6 432.4 L409.5 440.2 L410.5 434.3 L411.4 426.8 L412.4 421.3 L413.3 416.4 L414.4 420.4 L415.5 426.1 L416.6 430.2 L417.6 437.5 L418.5 440.9 L419.4 444.5 L420.3 448.3 L421.3 446.2 L422.2 441.9 L423.2 439.0 L424.1 435.3 L425.0 427.9 L425.9 421.1 L426.8 413.2 L427.7 409.1 L428.6 404.5 L429.5 401.3 L430.3 407.9 L431.1 411.0 L432.2 407.8 L433.3 401.3 L434.4 407.3 L435.4 411.0 L436.3 413.9 L437.2 414.7 L438.1 417.5 L439.0 425.5 L439.8 435.3 L440.7 436.4 L441.6 437.4 L442.5 440.7 L443.4 447.0 L444.3 451.2 L445.2 456.9 L446.0 457.0 L446.8 454.4 L447.6 455.2 L448.4 452.6 L449.3 449.4 L450.2 442.2 L451.1 439.6 L452.2 434.3 L453.2 431.0 L454.1 428.7 L454.9 423.6 L455.7 421.7 L456.5 416.4 L457.4 419.3 L458.3 421.4 L459.2 426.1 L460.0 420.1 L460.8 413.2 L461.6 418.4 L462.4 421.8 L463.4 417.1 L464.3 412.6 L465.3 409.5 L466.2 406.2 L467.1 413.0 L468.0 417.5 L468.9 421.8 L469.8 418.7 L470.7 417.3 L471.6 416.4 L472.7 425.6 L473.8 437.5 L474.8 433.8 L475.9 433.2 L477.0 432.5 L478.1 429.9 L479.0 424.5 L479.9 421.5 L480.8 416.9 L481.8 422.7 L482.9 428.8 L484.0 425.3 L485.1 424.0 L486.1 425.9 L487.0 425.1 L488.0 427.5 L489.0 425.5 L489.9 421.2 L490.9 419.7 L491.9 417.5 L492.9 418.7 L494.0 421.8 L494.8 419.1 L495.6 418.0 L496.5 426.8 L497.4 433.5 L498.3 439.6 L499.2 441.1 L500.0 443.9 L501.0 438.6 L502.1 449.8 L503.2 458.5 L504.1 452.7 L505.0 448.4 L505.9 443.9 L507.0 446.8 L508.1 447.2 L508.9 430.7 L509.7 413.2 L510.8 400.8 L511.8 391.1 L512.7 395.4 L513.6 395.5 L514.5 399.1 L515.4 403.0 L516.3 409.4 L517.2 413.2 L518.2 414.7 L519.1 416.8 L520.1 418.2 L521.0 421.8 L521.9 425.8 L522.8 432.9 L523.7 438.0 L524.6 431.7 L525.5 427.6 L526.4 421.8 L527.3 424.5 L528.1 427.9 L529.0 432.8 L529.9 434.3 L530.7 437.5 L531.7 441.5 L532.6 446.3 L533.6 447.7 L534.5 452.6 L535.4 446.5 L536.4 444.3 L537.3 439.1 L538.3 433.2 L539.2 423.0 L540.2 413.5 L541.1 406.0 L542.0 395.9 L542.9 402.8 L543.7 406.7 L544.6 404.8 L545.5 406.4 L546.4 404.0 L547.3 408.7 L548.2 411.2 L549.1 414.3 L550.0 416.5 L550.9 417.9 L551.8 421.8 L552.7 426.9 L553.6 436.7 L554.5 441.8 L555.3 438.7 L556.1 437.5 L557.0 444.6 L557.9 449.6 L558.8 456.9 L559.9 454.2 L560.9 449.3 L562.0 453.4 L563.1 456.9 L563.9 451.9 L564.7 447.2 L565.5 444.7 L566.3 439.6 L567.4 433.8 L568.5 431.0 L569.6 420.4 L570.6 411.6 L571.5 414.9 L572.3 419.0 L573.1 421.3 L573.9 424.0 L575.0 420.5 L576.0 418.6 L576.8 422.7 L577.7 424.0 L578.7 415.9 L579.8 409.9 L580.9 417.7 L582.0 428.8 L582.9 423.6 L583.8 419.6 L584.7 415.3 L585.6 421.4 L586.5 429.4 L587.4 438.0 L588.2 434.5 L589.1 432.0 L590.0 427.4 L590.9 425.1 L591.8 423.8 L592.6 421.0 L593.5 416.8 L594.4 413.2 L595.3 418.6 L596.2 423.0 L597.1 427.5 L598.1 424.4 L599.0 422.1 L600.0 421.8 L601.5 431.0 L602.3 427.3 L603.1 428.3 L603.9 425.6 L604.7 422.9 L605.5 426.2 L606.3 426.4 L607.4 421.1 L608.5 419.1 L609.4 422.4 L610.3 424.6 L611.2 427.5 L612.0 433.3 L612.9 436.9 L613.8 444.2 L614.6 446.1 L615.5 452.6 L616.4 451.4 L617.2 450.8 L618.1 450.1 L619.0 448.2 L619.8 446.1 L620.6 439.9 L621.4 433.3 L622.2 426.9 L623.1 418.6 L623.9 412.5 L624.7 408.1 L625.5 403.3 L626.3 396.4 L627.1 397.8 L627.9 396.4 L628.7 397.8 L629.5 397.0 L630.6 405.2 L631.7 411.0 L632.6 414.3 L633.4 417.6 L634.3 419.8 L635.1 423.6 L636.0 426.4 L636.8 433.4 L637.6 439.6 L638.5 433.3 L639.4 430.4 L640.3 425.0 L641.1 429.9 L641.9 432.7 L642.8 435.3 L643.6 437.4 L644.4 441.7 L645.2 444.4 L646.0 447.0 L646.8 450.4 L647.9 448.3 L649.0 443.9 L649.8 440.1 L650.6 439.9 L651.4 435.1 L652.2 434.2 L653.1 424.3 L654.0 413.7 L654.9 403.5 L656.0 407.4 L657.0 413.2 L657.9 411.1 L658.8 407.8 L659.7 405.1 L660.8 412.2 L661.9 418.6 L662.8 421.5 L663.6 420.8 L664.5 421.4 L665.4 423.9 L666.2 426.1 L667.3 436.4 L668.4 433.2 L669.5 428.8 L670.3 434.8 L671.1 441.7 L671.9 451.3 L672.7 456.9 L673.6 457.8 L674.4 457.3 L675.3 459.2 L676.1 457.6 L677.0 458.5 L677.8 454.1 L678.6 447.5 L679.4 443.3 L680.2 438.6 L681.3 436.9 L682.4 433.2 L683.2 424.6 L684.0 413.2 L685.1 422.2 L686.2 428.6 L687.1 425.7 L688.1 423.8 L689.0 420.4 L690.0 418.6 L690.8 414.8 L691.6 413.4 L692.4 412.0 L693.2 408.3 L694.3 416.2 L695.4 421.8 L696.3 421.4 L697.2 421.2 L698.1 418.6 L699.1 422.8 L700.2 428.6 L701.3 432.2 L702.4 438.0 L703.3 433.3 L704.3 428.1 L705.2 423.3 L706.1 419.6 L707.0 420.4 L707.8 422.2 L708.6 422.9 L709.4 424.0 L710.2 426.2 L711.0 430.8 L711.8 434.1 L712.6 435.3 L713.8 431.2 L715.0 427.5 L716.5 427.5 L717.6 422.7 L718.6 420.7 L719.6 419.4 L720.5 422.5 L721.5 420.0 L722.4 421.8 L723.2 425.9 L724.0 428.6 L725.1 436.5 L726.2 443.9 L727.0 444.2 L727.9 446.7 L728.8 444.9 L729.6 446.2 L730.5 448.3 L731.4 446.8 L732.4 443.9 L733.3 445.3 L734.3 442.9 L735.4 431.4 L736.4 421.8 L737.3 412.3 L738.2 403.7 L739.1 397.0 L739.9 397.7 L740.8 397.3 L741.6 398.2 L742.4 398.1 L743.2 404.3 L744.0 410.4 L744.8 416.6 L745.6 420.7 L746.7 423.0 L747.8 424.0 L748.6 425.0 L749.4 427.9 L750.2 429.0 L751.0 432.1 L751.9 426.8 L752.9 424.7 L753.8 421.9 L754.8 417.5 L755.7 420.5 L756.6 425.0 L757.5 429.9 L758.6 431.0 L759.6 433.2 L760.5 437.6 L761.4 440.8 L762.3 444.5 L763.1 441.5 L764.0 438.6 L764.8 434.0 L765.6 431.0 L766.5 424.3 L767.5 417.0 L768.4 406.5 L769.4 400.2 L770.2 403.9 L771.1 405.3 L772.0 406.7 L772.9 410.3 L773.7 416.4 L774.7 409.9 L775.6 416.0 L776.5 422.8 L777.4 428.6 L778.3 430.8 L779.2 429.8 L780.1 431.0 L781.2 430.2 L782.3 428.8 L783.1 432.3 L783.9 434.2 L784.7 436.8 L785.5 437.5 L786.3 441.1 L787.2 445.5 L788.0 447.8 L788.8 452.6 L789.6 452.5 L790.4 452.0 L791.2 450.6 L792.0 449.3 L792.9 448.1 L793.7 444.5 L794.6 444.9 L795.5 443.2 L796.3 439.6 L797.4 431.8 L798.5 420.7 L799.4 419.6 L800.4 419.3 L801.3 416.5 L802.3 415.9 L803.2 419.2 L804.1 421.0 L805.0 421.8 L806.0 428.6 L806.9 424.4 L807.8 419.8 L808.7 417.5 L809.5 420.4 L810.4 423.9 L811.2 427.7 L812.0 429.9 L812.8 431.0 L813.6 430.5 L814.4 434.2 L815.2 434.2 L816.1 429.7 L817.0 429.1 L817.9 425.0 L818.8 420.9 L819.6 418.4 L820.5 417.0 L821.4 411.7 L822.2 409.9 L823.1 412.0 L824.0 416.5 L824.9 419.6 L826.0 428.0 L827.1 434.8 L828.1 434.0 L829.0 431.5 L830.0 428.8 L830.4 428.8 L831.2 433.1 L832.0 434.2 L832.8 431.6 L833.6 430.6 L834.4 425.1 L835.3 424.0 L836.1 423.6 L836.9 425.0 L837.9 428.7 L839.0 432.1 L839.8 436.8 L840.6 443.6 L841.5 448.7 L842.3 453.7 L843.1 452.4 L843.9 452.1 L844.7 449.8 L845.5 448.3 L846.6 444.9 L847.7 442.9 L848.5 435.8 L849.3 430.8 L850.1 424.4 L850.9 416.4 L851.7 409.6 L852.5 406.0 L853.3 400.6 L854.1 393.2 L855.2 395.7 L856.3 398.1 L857.1 402.9 L857.9 406.2 L858.7 411.9 L859.5 416.4 L860.6 424.3 L861.7 432.1 L862.8 429.5 L863.8 426.1 L864.9 425.2 L866.0 427.5 L867.1 427.0 L868.2 423.4 L869.2 426.0 L870.3 428.6 L871.2 431.0 L872.0 435.2 L872.9 437.2 L873.7 439.8 L874.6 443.3 L875.4 444.0 L876.3 448.3 L877.2 445.5 L878.1 442.2 L879.0 439.6 L880.0 434.4 L881.1 426.1 L882.0 418.2 L882.9 406.6 L883.8 398.1 L884.7 402.3 L885.6 405.4 L886.5 411.0 L887.5 415.5 L888.4 421.5 L889.3 426.6 L890.3 429.9 L891.1 435.2 L891.9 440.7 L893.0 436.3 L894.1 433.2 L895.1 431.0 L896.2 431.0 L897.3 428.7 L898.4 425.6 L899.2 431.4 L900.0 434.2 L900.8 436.8 L901.6 442.7 L902.4 443.9 L903.2 449.3 L904.3 452.6 L905.4 458.0 L906.5 452.7 L907.6 449.3 L908.5 446.0 L909.3 440.8 L910.2 437.5 L911.1 432.3 L911.9 428.4 L912.7 422.0 L913.5 418.6 L914.3 416.3 L915.1 411.1 L915.9 409.3 L916.7 406.2 L917.8 409.4 L918.9 414.3 L920.0 419.2 L921.0 426.1 L921.8 423.0 L922.7 419.6 L923.5 423.3 L924.3 427.1 L925.1 431.1 L925.9 435.3 L926.8 432.3 L927.7 428.0 L928.6 426.1 L929.7 425.0 L930.8 425.9 L931.6 423.1 L932.5 420.0 L933.3 416.4 L934.2 414.3 L935.1 409.9 L936.0 412.1 L936.9 414.7 L937.8 415.3 L938.7 419.8 L939.7 427.0 L940.6 432.6 L941.5 436.9 L942.4 434.0 L943.3 427.7 L944.1 423.3 L945.0 419.6 L946.5 431.0 L947.6 426.2 L948.6 418.6 L949.4 421.4 L950.3 426.1 L951.1 430.8 L951.9 432.1 L952.9 435.6 L954.0 436.4 L955.1 444.9 L956.2 455.8 L957.1 447.7 L958.0 442.2 L958.9 434.2 L959.7 437.7 L960.5 442.9 L961.6 435.6 L962.7 431.0 L963.5 423.8 L964.3 414.3 L965.4 414.0 L966.4 414.3 L967.5 406.1 L968.6 395.9 L969.4 399.0 L970.2 404.2 L971.0 409.5 L971.8 413.2 L972.9 407.8 L974.0 405.6 L974.9 410.7 L975.8 418.5 L976.7 424.0 L977.5 419.4 L978.3 412.1 L979.2 420.3 L980.1 424.1 L981.0 432.1 L981.9 427.2 L982.8 423.2 L983.7 417.5 L984.6 423.3 L985.6 429.7 L986.5 433.8 L987.5 440.7 L988.3 435.5 L989.1 433.2 L990.2 435.6 L991.3 440.7 L992.2 431.8 L993.1 426.1 L994.0 418.6 L995.0 417.0 L996.1 415.3 L997.2 410.4 L998.3 405.1 L999.2 408.6 L1000.2 413.4 L1001.1 418.2 L1002.0 424.0 L1003.0 428.5 L1003.9 432.4 L1004.9 435.5 L1005.8 437.5 L1006.7 430.9 L1007.6 425.5 L1008.5 421.8 L1009.4 426.4 L1010.3 427.8 L1011.2 431.0 L1012.0 426.8 L1012.8 420.7 L1013.7 423.2 L1014.6 426.7 L1015.5 429.9 L1016.3 435.7 L1017.2 441.2 L1018.0 447.5 L1018.8 451.3 L1019.6 459.4 L1020.4 464.4 L1021.2 460.0 L1022.0 452.0 L1022.8 447.3 L1023.6 441.8 L1024.5 441.9 L1025.4 440.0 L1026.3 439.6 L1027.1 430.4 L1027.9 422.0 L1028.8 415.0 L1029.6 406.7 L1030.6 407.7 L1031.7 412.1 L1032.5 416.9 L1033.3 420.1 L1034.2 423.3 L1035.0 426.1 L1035.9 423.8 L1036.8 419.4 L1037.7 415.3 L1038.6 422.0 L1039.5 429.7 L1040.4 436.4 L1041.3 431.2 L1042.2 427.6 L1043.1 420.7 L1044.0 423.2 L1044.9 422.8 L1045.8 425.0 L1046.7 421.0 L1047.6 415.1 L1048.4 408.9 L1049.3 411.3 L1050.2 412.9 L1051.0 413.1 L1051.9 416.2 L1052.8 416.4 L1053.6 421.3 L1054.4 424.4 L1055.2 428.3 L1056.0 431.0 L1056.9 429.6 L1057.8 426.0 L1058.7 424.0 L1060.0 428.6 L1060.4 436.4 L1061.2 431.5 L1062.0 425.0 L1063.0 427.8 L1063.9 432.9 L1064.8 437.5 L1065.8 441.8 L1066.9 439.6 L1067.9 440.7 L1069.0 445.1 L1070.1 450.4 L1071.1 446.0 L1072.0 441.1 L1072.9 434.9 L1073.9 431.0 L1074.7 436.3 L1075.5 438.6 L1076.4 432.8 L1077.3 425.4 L1078.2 419.6 L1079.3 424.8 L1080.4 428.8 L1081.2 423.5 L1082.0 417.9 L1082.8 411.9 L1083.6 406.7 L1084.7 414.9 L1085.8 419.6 L1086.8 414.2 L1087.9 407.8 L1088.8 414.6 L1089.7 420.9 L1090.6 426.1 L1091.5 426.3 L1092.4 421.6 L1093.3 421.8 L1094.2 427.8 L1095.1 433.8 L1096.0 438.6 L1096.9 434.5 L1097.8 431.7 L1098.7 428.8 L1099.8 434.9 L1100.9 443.9 L1101.9 437.0 L1103.0 432.1 L1103.9 434.5 L1104.8 436.5 L1105.7 440.7 L1106.6 432.5 L1107.5 427.3 L1108.4 418.6 L1109.3 418.7 L1110.2 418.6 L1111.1 418.6 L1112.2 416.6 L1113.3 411.6 L1114.2 420.8 L1115.1 431.2 L1116.0 438.6 L1116.8 440.3 L1117.7 442.2 L1118.6 441.0 L1119.4 444.1 L1120.3 445.0 L1121.2 440.4 L1122.2 432.4 L1123.1 429.9 L1124.1 422.9 L1125.0 416.9 L1125.9 413.1 L1126.8 408.3 L1127.6 413.9 L1128.4 421.8 L1129.2 427.1 L1130.0 432.8 L1130.8 436.3 L1131.6 444.6 L1132.4 448.2 L1133.2 453.9 L1134.0 459.5 L1134.9 464.4 L1135.7 461.6 L1136.5 458.9 L1137.3 457.7 L1138.1 454.7 L1138.9 448.1 L1139.7 440.4 L1140.5 435.0 L1141.3 427.5 L1142.4 413.7 L1143.5 401.3 L1144.4 401.0 L1145.4 403.1 L1146.3 403.8 L1147.3 406.7 L1148.3 416.5 L1149.4 428.6 L1150.2 428.9 L1151.0 427.1 L1151.8 428.3 L1152.7 426.4 L1153.5 433.3 L1154.3 438.6 L1155.2 431.8 L1156.1 429.8 L1157.0 422.9 L1157.8 423.3 L1158.7 419.3 L1159.5 421.0 L1160.4 418.3 L1161.2 417.4 L1162.1 418.0 L1162.9 415.3 L1163.7 415.0 L1164.5 416.5 L1165.3 418.4 L1166.1 418.2 L1167.0 417.9 L1167.8 418.6 L1168.7 425.1 L1169.6 429.4 L1170.5 433.2 L1171.3 430.4 L1172.1 425.6 L1172.9 424.3 L1173.7 420.7 L1175.0 424.0 L1175.9 426.1 L1176.7 428.6 L1177.6 430.3 L1178.4 432.4 L1179.2 436.6 L1180.0 437.9 L1180.8 441.8 L1181.6 445.6 L1182.4 449.9 L1183.4 449.2 L1184.3 447.3 L1185.2 445.4 L1186.2 445.0 L1187.3 438.8 L1188.3 432.1 L1189.1 431.3 L1190.0 431.9 L1190.8 430.6 L1191.6 429.9 L1192.7 427.0 L1193.7 420.7 L1194.5 418.8 L1195.4 414.5 L1196.2 409.3 L1197.0 406.7 L1197.8 404.9 L1198.7 407.1 L1199.5 406.3 L1200.4 405.3 L1201.2 403.9 L1202.1 403.1 L1202.9 403.5 L1203.8 410.9 L1204.7 417.3 L1205.6 424.0 L1206.5 427.0 L1207.3 430.0 L1208.1 433.1 L1209.0 434.0 L1209.8 437.0 L1210.7 442.2 L1211.5 443.4 L1212.4 440.7 L1213.3 436.4 L1214.2 431.0 L1215.0 427.9 L1215.9 426.5 L1216.7 425.7 L1217.5 425.0 L1218.5 424.8 L1219.6 425.0 L1220.5 421.5 L1221.4 415.8 L1222.3 413.2 L1223.3 414.1 L1224.2 413.3 L1225.2 414.2 L1226.1 416.4 L1227.0 419.5 L1227.9 421.6 L1228.8 424.0 L1229.6 427.8 L1230.4 430.3 L1231.2 434.0 L1232.0 437.5 L1233.1 446.1 L1234.0 442.6 L1234.9 440.5 L1235.8 438.5 L1236.6 435.1 L1237.4 431.2 L1238.2 424.4 L1239.0 420.3 L1239.9 418.4 L1240.7 413.2 L1241.6 416.5 L1242.5 419.8 L1243.4 421.8 L1244.2 426.7 L1245.0 433.3 L1245.8 438.6 L1246.6 446.3 L1247.4 450.7 L1248.2 457.5 L1249.0 464.5 L1249.8 468.7 L1250.6 464.1 L1251.5 460.8 L1252.3 457.4 L1253.1 452.6 L1253.9 447.4 L1254.7 439.1 L1255.5 432.3 L1256.3 426.1 L1257.2 418.3 L1258.1 414.4 L1259.0 406.7 L1259.8 407.4 L1260.6 409.6 L1261.4 413.4 L1262.2 415.3 L1263.1 420.0 L1263.9 425.4 L1264.7 428.8 L1265.5 434.2 L1266.3 434.1 L1267.1 430.6 L1267.9 430.0 L1268.7 429.9 L1269.8 436.4 L1270.6 433.1 L1271.4 427.2 L1272.2 424.1 L1273.0 421.7 L1273.8 417.7 L1274.6 413.2 L1275.5 412.7 L1276.3 412.5 L1277.1 413.5 L1277.9 414.2 L1278.7 418.0 L1279.5 419.7 L1280.3 421.8 L1281.1 426.1 L1282.2 423.6 L1283.3 419.6 L1284.2 421.3 L1285.1 423.9 L1286.0 424.0 L1287.1 422.8 L1288.1 418.6 L1289.0 425.2 L1289.9 428.8 L1290.8 434.2 L1291.8 437.7 L1292.7 438.4 L1293.7 440.9 L1294.0 443.9" fill="none" stroke="#bfe9f5" stroke-width="1.7" stroke-linejoin="round"/><rect x="370.5" y="149.0" width="924.30" height="557.00" fill="none" stroke="#eeeeee" stroke-width="1.8"/></svg><div class="t" style="top:142.87px;height:15.82px;line-height:15.82px;font-size:11.3px;color:#bfe9f5;font-weight:400;left:-33.19999999999999px;width:400px;text-align:right;">5.0m</div><div class="t" style="top:198.39px;height:15.82px;line-height:15.82px;font-size:11.3px;color:#bfe9f5;font-weight:400;left:-33.19999999999999px;width:400px;text-align:right;">4.0m</div><div class="t" style="top:253.91px;height:15.82px;line-height:15.82px;font-size:11.3px;color:#bfe9f5;font-weight:400;left:-33.19999999999999px;width:400px;text-align:right;">3.0m</div><div class="t" style="top:309.43px;height:15.82px;line-height:15.82px;font-size:11.3px;color:#bfe9f5;font-weight:400;left:-33.19999999999999px;width:400px;text-align:right;">2.0m</div><div class="t" style="top:364.95px;height:15.82px;line-height:15.82px;font-size:11.3px;color:#bfe9f5;font-weight:400;left:-33.19999999999999px;width:400px;text-align:right;">1.0m</div><div class="t" style="top:420.47px;height:15.82px;line-height:15.82px;font-size:11.3px;color:#bfe9f5;font-weight:400;left:-33.19999999999999px;width:400px;text-align:right;">0.0m</div><div class="t" style="top:475.99px;height:15.82px;line-height:15.82px;font-size:11.3px;color:#bfe9f5;font-weight:400;left:-33.19999999999999px;width:400px;text-align:right;">-1.0m</div><div class="t" style="top:531.51px;height:15.82px;line-height:15.82px;font-size:11.3px;color:#bfe9f5;font-weight:400;left:-33.19999999999999px;width:400px;text-align:right;">-2.0m</div><div class="t" style="top:587.03px;height:15.82px;line-height:15.82px;font-size:11.3px;color:#bfe9f5;font-weight:400;left:-33.19999999999999px;width:400px;text-align:right;">-3.0m</div><div class="t" style="top:642.55px;height:15.82px;line-height:15.82px;font-size:11.3px;color:#bfe9f5;font-weight:400;left:-33.19999999999999px;width:400px;text-align:right;">-4.0m</div><div class="t" style="top:698.07px;height:15.82px;line-height:15.82px;font-size:11.3px;color:#bfe9f5;font-weight:400;left:-33.19999999999999px;width:400px;text-align:right;">-5.0m</div><div class="t" style="top:708.27px;height:15.82px;line-height:15.82px;font-size:11.3px;color:#bfe9f5;font-weight:400;left:360px;">0.0m</div><div class="t" style="top:708.27px;height:15.82px;line-height:15.82px;font-size:11.3px;color:#bfe9f5;font-weight:400;left:255.91000000000008px;width:600px;text-align:center;">10.0m</div><div class="t" style="top:708.27px;height:15.82px;line-height:15.82px;font-size:11.3px;color:#bfe9f5;font-weight:400;left:440.97px;width:600px;text-align:center;">20.0m</div><div class="t" style="top:708.27px;height:15.82px;line-height:15.82px;font-size:11.3px;color:#bfe9f5;font-weight:400;left:626.0300000000001px;width:600px;text-align:center;">30.0m</div><div class="t" style="top:708.27px;height:15.82px;line-height:15.82px;font-size:11.3px;color:#bfe9f5;font-weight:400;left:811.0900000000001px;width:600px;text-align:center;">40.0m</div><div class="t" style="top:708.27px;height:15.82px;line-height:15.82px;font-size:11.3px;color:#bfe9f5;font-weight:400;left:904.5999999999999px;width:400px;text-align:right;">50.0m</div><div class="t" style="top:723.47px;height:16.1px;line-height:16.1px;font-size:11.5px;color:#bfe9f5;font-weight:400;left:531.6px;width:600px;text-align:center;">Time (s)</div><div class="t" style="left:219.3px;top:420.4px;width:200px;height:16px;line-height:16px;font-size:11.5px;color:#bfe9f5;text-align:center;transform:rotate(-90deg);">Amplitude (FS)</div><div class="t" style="left:1223.0px;top:423.5px;width:200px;height:16px;line-height:16px;font-size:11.5px;color:#bfe9f5;text-align:center;transform:rotate(-90deg);">Signal Level dBFS</div><svg style="position:absolute;left:0px;top:0px;pointer-events:none;" width="1456" height="927" viewBox="0 0 1456 927"><defs><linearGradient id="vir" gradientUnits="userSpaceOnUse" x1="0" y1="714.65" x2="0" y2="148.15"><stop offset="0.00" stop-color="#440154"/><stop offset="0.10" stop-color="#482475"/><stop offset="0.20" stop-color="#414487"/><stop offset="0.30" stop-color="#355f8d"/><stop offset="0.40" stop-color="#2a788e"/><stop offset="0.50" stop-color="#21918c"/><stop offset="0.60" stop-color="#22a884"/><stop offset="0.70" stop-color="#44bf70"/><stop offset="0.80" stop-color="#7ad151"/><stop offset="0.90" stop-color="#bddf26"/><stop offset="1.00" stop-color="#fde725"/></linearGradient></defs><rect x="1356.6" y="293.74" width="36.600000000000136" height="420.91" fill="url(#vir)"/><line x1="1356.6" y1="204.80" x2="1393.2" y2="204.80" stroke="#b0b0b0" stroke-width="1" opacity="0.55"/><line x1="1356.6" y1="261.45" x2="1393.2" y2="261.45" stroke="#b0b0b0" stroke-width="1" opacity="0.55"/><line x1="1356.6" y1="318.10" x2="1393.2" y2="318.10" stroke="#b0b0b0" stroke-width="1" opacity="0.55"/><line x1="1356.6" y1="374.75" x2="1393.2" y2="374.75" stroke="#b0b0b0" stroke-width="1" opacity="0.55"/><line x1="1356.6" y1="431.40" x2="1393.2" y2="431.40" stroke="#b0b0b0" stroke-width="1" opacity="0.55"/><line x1="1356.6" y1="488.05" x2="1393.2" y2="488.05" stroke="#b0b0b0" stroke-width="1" opacity="0.55"/><line x1="1356.6" y1="544.70" x2="1393.2" y2="544.70" stroke="#b0b0b0" stroke-width="1" opacity="0.55"/><line x1="1356.6" y1="601.35" x2="1393.2" y2="601.35" stroke="#b0b0b0" stroke-width="1" opacity="0.55"/><line x1="1356.6" y1="658.00" x2="1393.2" y2="658.00" stroke="#b0b0b0" stroke-width="1" opacity="0.55"/><line x1="1356.6" y1="181.01" x2="1393.2" y2="181.01" stroke="#d6e21f" stroke-width="2.2"/><line x1="1356.6" y1="242.19" x2="1393.2" y2="242.19" stroke="#8fd744" stroke-width="2.2"/><rect x="1356.0" y="148.9" width="37.80000000000014" height="565.10" fill="none" stroke="#e6e6e6" stroke-width="2"/></svg><div class="t" style="top:143.47px;height:15.96px;line-height:15.96px;font-size:11.4px;color:#bfe9f5;font-weight:400;left:952.3px;width:400px;text-align:right;">-46</div><div class="t" style="top:199.65px;height:15.96px;line-height:15.96px;font-size:11.4px;color:#bfe9f5;font-weight:400;left:952.3px;width:400px;text-align:right;">-56</div><div class="t" style="top:255.83px;height:15.96px;line-height:15.96px;font-size:11.4px;color:#bfe9f5;font-weight:400;left:952.3px;width:400px;text-align:right;">-66</div><div class="t" style="top:312.01px;height:15.96px;line-height:15.96px;font-size:11.4px;color:#bfe9f5;font-weight:400;left:952.3px;width:400px;text-align:right;">-76</div><div class="t" style="top:368.19px;height:15.96px;line-height:15.96px;font-size:11.4px;color:#bfe9f5;font-weight:400;left:952.3px;width:400px;text-align:right;">-86</div><div class="t" style="top:424.37px;height:15.96px;line-height:15.96px;font-size:11.4px;color:#bfe9f5;font-weight:400;left:952.3px;width:400px;text-align:right;">-96</div><div class="t" style="top:480.55px;height:15.96px;line-height:15.96px;font-size:11.4px;color:#bfe9f5;font-weight:400;left:952.3px;width:400px;text-align:right;">-106</div><div class="t" style="top:536.73px;height:15.96px;line-height:15.96px;font-size:11.4px;color:#bfe9f5;font-weight:400;left:952.3px;width:400px;text-align:right;">-116</div><div class="t" style="top:592.91px;height:15.96px;line-height:15.96px;font-size:11.4px;color:#bfe9f5;font-weight:400;left:952.3px;width:400px;text-align:right;">-126</div><div class="t" style="top:649.09px;height:15.96px;line-height:15.96px;font-size:11.4px;color:#bfe9f5;font-weight:400;left:952.3px;width:400px;text-align:right;">-136</div><div class="t" style="top:705.27px;height:15.96px;line-height:15.96px;font-size:11.4px;color:#bfe9f5;font-weight:400;left:952.3px;width:400px;text-align:right;">-146</div><div style="position:absolute;left:736px;top:750px;width:28px;height:28px;border-radius:50%;background:#ff6b00;"></div><div style="position:absolute;left:780.4px;top:753.2px;width:5.7px;height:22px;background:#ffffff;"></div><div style="position:absolute;left:788.1px;top:753.2px;width:5.7px;height:22px;background:#ffffff;"></div><div class="t" style="top:755.96px;height:19.32px;line-height:19.32px;font-size:13.8px;color:#52595c;font-weight:400;left:858.7px;">Monitoring</div><div class="t" style="top:781.37px;height:13.02px;line-height:13.02px;font-size:9.3px;color:#bfe9f5;font-weight:400;left:549.6px;width:600px;text-align:center;">0h 00m 34.7s</div><div class="t" style="top:791.16px;height:25.2px;line-height:25.2px;font-size:18px;color:#ff6b00;font-weight:700;letter-spacing:0.95px;left:549.4px;width:600px;text-align:center;-webkit-text-stroke:0.15px currentColor;">0h 00m 00.0s</div><div class="t" style="top:823.72px;height:17.5px;line-height:17.5px;font-size:12.5px;color:#bfe9f5;font-weight:400;left:728.8px;">File:</div><div style="position:absolute;left:755px;top:819.5px;width:219.7px;height:22.7px;box-sizing:border-box;border:1.5px solid #7a7a7a;background:#111;"></div><div class="t" style="top:825.08px;height:15.68px;line-height:15.68px;font-size:11.2px;color:#bfe9f5;font-weight:400;left:569px;width:400px;text-align:right;">Recording.wav</div>
</body></html>
